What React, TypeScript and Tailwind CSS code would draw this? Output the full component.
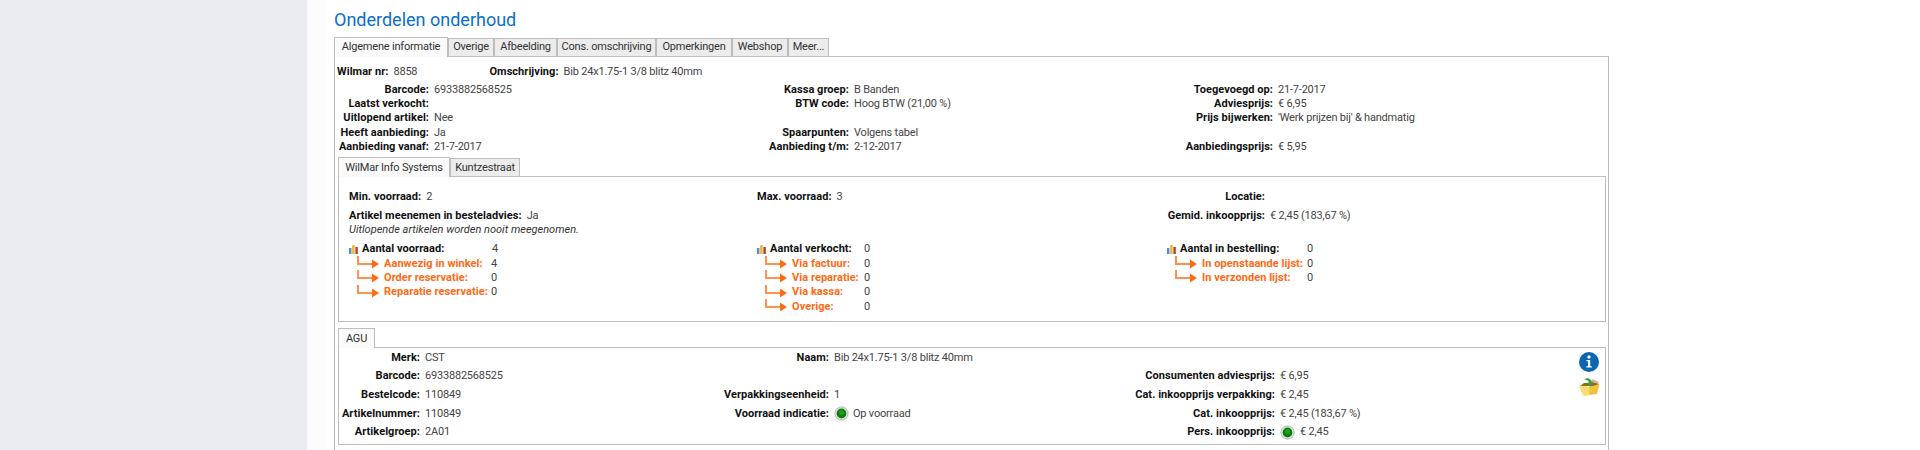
import type { ReactNode } from "react";

const font = { fontFamily: 'Roboto, "Open Sans", sans-serif' };

function BarIcon() {
  return (
    <svg width="9" height="9" viewBox="0 0 9 9" className="shrink-0">
      <rect x="0" y="3" width="2.4" height="6" fill="#4f8fc9" />
      <rect x="3.2" y="0" width="2.4" height="9" fill="#e5b53c" />
      <rect x="6.4" y="2" width="2.4" height="7" fill="#b5401c" />
    </svg>
  );
}

function ArrowIcon() {
  return (
    <svg width="22" height="16" viewBox="0 0 22 16" className="shrink-0">
      <path d="M1 0V8H16" fill="none" stroke="#ff9248" strokeWidth="2" />
      <path d="M15 3.5L22 8L15 12.5Z" fill="#ff6a13" />
    </svg>
  );
}

function Dot() {
  return (
    <svg width="15" height="15" viewBox="0 0 15 15" className="shrink-0">
      <circle cx="7.5" cy="7.5" r="7.2" fill="#c4c8c4" />
      <circle cx="7.5" cy="7.5" r="5.8" fill="#eef0ee" />
      <circle cx="7.5" cy="7.5" r="4.9" fill="#0c7f10" />
      <circle cx="7.5" cy="6.5" r="2.6" fill="#1c9e1e" />
    </svg>
  );
}

function InfoIcon() {
  return (
    <svg width="20" height="20" viewBox="0 0 20 20">
      <circle cx="10" cy="10" r="10" fill="#0b66b2" />
      <circle cx="10" cy="5" r="1.7" fill="#fff" />
      <path d="M7.5 8H11.2V14.3H12.8V15.6H7.3V14.3H9V9.3H7.5Z" fill="#fff" />
    </svg>
  );
}

function BasketIcon() {
  return (
    <svg width="21" height="19" viewBox="0 0 21 19">
      <path d="M13 2L20 5L18 9L11 7Z" fill="#e8a9a0" />
      <path d="M1 9L5 6H17L20 8L19 9Z" fill="#8d6a1c" />
      <path d="M0.5 8.5L10 10L20.5 7L18 17L5 18.5L2.5 15Z" fill="#f4c13d" />
      <path d="M0.5 8.5L10 10L10.5 18.5L5 18.5L2.5 15Z" fill="#fbdc73" />
      <path d="M5 2.5C8 0 12 1 12.5 5L15 4.5L11.5 10L7.5 6L10 5.5C9.5 3.5 7.5 2.5 5 2.5Z" fill="#3f9c3b" />
    </svg>
  );
}

function Label({ className = "", children }: { className?: string; children?: ReactNode }) {
  return <span className={`shrink-0 font-bold tracking-[0.05px] text-[#111] whitespace-nowrap ${className}`}>{children}</span>;
}

function Tab({ label, active, className = "" }: { label: string; active?: boolean; className?: string }) {
  return (
    <div
      className={
        active
          ? `h-[20px] border border-b-0 border-[#bdbdbd] bg-[#fafafa] flex items-center justify-center whitespace-nowrap text-[#333] -mb-px relative ${className}`
          : `h-[18px] border border-b-0 border-[#bdbdbd] bg-[#ececec] flex items-center justify-center whitespace-nowrap text-[#333] ${className}`
      }
    >
      {label}
    </div>
  );
}

function InfoRow({ a, av, b, bv, c, cv }: { a: string; av?: string; b?: string; bv?: string; c?: string; cv?: string }) {
  return (
    <div className="flex leading-[14.33px] h-[14.33px]">
      <div className="w-[425px] flex">
        <Label className="w-[94px] flex justify-end">{a}</Label>
        <span className="ml-[5px]">{av}</span>
      </div>
      <div className="w-[424px] flex">
        <Label className="w-[89px] flex justify-end">{b}</Label>
        <span className="ml-[5px]">{bv}</span>
      </div>
      <div className="flex">
        <Label className="w-[89px] flex justify-end">{c}</Label>
        <span className="ml-[5px]">{cv}</span>
      </div>
    </div>
  );
}

function Stat({ label, value, rows, valueCol, subCol }: {
  label: string;
  value: string;
  rows: [string, string][];
  valueCol: string;
  subCol: string;
}) {
  return (
    <div className="leading-[14.33px]">
      <div className="flex items-center h-[14.33px]">
        <BarIcon />
        <Label className={`ml-[4px] ${valueCol}`}>{label}</Label>
        <span>{value}</span>
      </div>
      {rows.map(([name, val]) => (
        <div key={name} className="flex items-center h-[14.33px]">
          <span className="ml-[8px] mr-[5px] flex"><ArrowIcon /></span>
          <span className={`shrink-0 font-bold tracking-[0.05px] text-[#ff6a13] whitespace-nowrap ${subCol}`}>{name}</span>
          <span>{val}</span>
        </div>
      ))}
    </div>
  );
}

function AguRow({ a, av, b, bv, c, cv }: { a: string; av: string; b?: string; bv?: ReactNode; c?: string; cv?: ReactNode }) {
  return (
    <div className="flex items-center h-[18.7px]">
      <div className="w-[413px] flex items-center">
        <Label className="w-[81px] flex justify-end">{a}</Label>
        <span className="ml-[5px]">{av}</span>
      </div>
      <div className="w-[446px] flex items-center">
        <Label className="w-[77px] flex justify-end">{b}</Label>
        <div className="ml-[5px] flex items-center gap-[4px]">{bv}</div>
      </div>
      <div className="flex items-center">
        <Label className="w-[77px] flex justify-end">{c}</Label>
        <div className="ml-[5px] flex items-center gap-[5px]">{cv}</div>
      </div>
    </div>
  );
}

export default function App() {
  return (
    <div className="h-[450px] w-[1920px] overflow-hidden flex bg-white text-[11px] tracking-[-0.2px] text-[#444]" style={font}>
      {/* Sidebar */}
      <div className="w-[307px] shrink-0 bg-[#e9ecf1]" />
      <div className="w-[18px] shrink-0 bg-[#fcfcfd]" />

      <main className="pl-[9px] w-[1284px] shrink-0">
        <h1 className="text-[18px] tracking-normal leading-[26px] pt-[7px] h-[36px] text-[#0b6fcb]">Onderdelen onderhoud</h1>

        {/* Tabs */}
        <div className="flex items-end h-[19.5px]">
          <Tab label="Algemene informatie" active className="w-[114px]" />
          <Tab label="Overige" className="w-[46px]" />
          <Tab label="Afbeelding" className="w-[63px]" />
          <Tab label="Cons. omschrijving" className="w-[99px]" />
          <Tab label="Opmerkingen" className="w-[76px]" />
          <Tab label="Webshop" className="w-[56px]" />
          <Tab label="Meer..." className="w-[41px]" />
        </div>

        <div className="border border-[#bdbdbd] h-[420px]">
          <div className="flex leading-[14.33px] mt-[8px] ml-[2px]">
            <Label>Wilmar nr:</Label>
            <span className="ml-[5px] w-[96px]">8858</span>
            <Label>Omschrijving:</Label>
            <span className="ml-[5px]">Bib 24x1.75-1 3/8 blitz 40mm</span>
          </div>

          <div className="mt-[4px]">
            <InfoRow a="Barcode:" av="6933882568525" b="Kassa groep:" bv="B Banden" c="Toegevoegd op:" cv="21-7-2017" />
            <InfoRow a="Laatst verkocht:" b="BTW code:" bv="Hoog BTW (21,00 %)" c="Adviesprijs:" cv="€ 6,95" />
            <InfoRow a="Uitlopend artikel:" av="Nee" c="Prijs bijwerken:" cv="'Werk prijzen bij' & handmatig" />
            <InfoRow a="Heeft aanbieding:" av="Ja" b="Spaarpunten:" bv="Volgens tabel" />
            <InfoRow a="Aanbieding vanaf:" av="21-7-2017" b="Aanbieding t/m:" bv="2-12-2017" c="Aanbiedingsprijs:" cv="€ 5,95" />
          </div>

          {/* Stock tabs */}
          <div className="flex items-end h-[19px] mt-[3px] ml-[3px]">
            <Tab label="WilMar Info Systems" active className="w-[112px]" />
            <Tab label="Kuntzestraat" className="w-[70px]" />
          </div>
          <div className="ml-[3px] mr-[2px] border border-[#bdbdbd] h-[146px] pl-[10px] pt-[13px]">
            <div className="flex leading-[14px]">
              <div className="w-[408px]">
                <Label>Min. voorraad:</Label>
                <span className="ml-[5px]">2</span>
              </div>
              <div className="w-[410px]">
                <Label>Max. voorraad:</Label>
                <span className="ml-[5px]">3</span>
              </div>
              <Label className="w-[98px] flex justify-end">Locatie:</Label>
            </div>
            <div className="flex leading-[14px] mt-[5px]">
              <div className="w-[818px]">
                <Label>Artikel meenemen in besteladvies:</Label>
                <span className="ml-[5px]">Ja</span>
              </div>
              <Label className="w-[98px] flex justify-end">Gemid. inkoopprijs:</Label>
              <span className="ml-[5px]">€ 2,45 (183,67 %)</span>
            </div>
            <div className="italic tracking-normal leading-[14px] text-[#333]">Uitlopende artikelen worden nooit meegenomen.</div>

            <div className="flex mt-[5px]">
              <div className="w-[408px]">
                <Stat
                  label="Aantal voorraad:"
                  value="4"
                  valueCol="w-[130px]"
                  subCol="w-[107px]"
                  rows={[["Aanwezig in winkel:", "4"], ["Order reservatie:", "0"], ["Reparatie reservatie:", "0"]]}
                />
              </div>
              <div className="w-[410px]">
                <Stat
                  label="Aantal verkocht:"
                  value="0"
                  valueCol="w-[94px]"
                  subCol="w-[72px]"
                  rows={[["Via factuur:", "0"], ["Via reparatie:", "0"], ["Via kassa:", "0"], ["Overige:", "0"]]}
                />
              </div>
              <Stat
                label="Aantal in bestelling:"
                value="0"
                valueCol="w-[127px]"
                subCol="w-[105px]"
                rows={[["In openstaande lijst:", "0"], ["In verzonden lijst:", "0"]]}
              />
            </div>
          </div>

          {/* Supplier tabs */}
          <div className="flex items-end h-[20px] mt-[5px] ml-[3px]">
            <Tab label="AGU" active className="w-[37px]" />
          </div>
          <div className="ml-[3px] mr-[2px] border border-[#bdbdbd] h-[98px] flex">
            <div className="flex-1">
              <AguRow a="Merk:" av="CST" b="Naam:" bv="Bib 24x1.75-1 3/8 blitz 40mm" />
              <AguRow a="Barcode:" av="6933882568525" c="Consumenten adviesprijs:" cv="€ 6,95" />
              <AguRow a="Bestelcode:" av="110849" b="Verpakkingseenheid:" bv="1" c="Cat. inkoopprijs verpakking:" cv="€ 2,45" />
              <AguRow a="Artikelnummer:" av="110849" b="Voorraad indicatie:" bv={<><Dot /><span>Op voorraad</span></>} c="Cat. inkoopprijs:" cv="€ 2,45 (183,67 %)" />
              <AguRow a="Artikelgroep:" av="2A01" c="Pers. inkoopprijs:" cv={<><Dot /><span>€ 2,45</span></>} />
            </div>
            <div className="w-[26px] pt-[4px] flex flex-col gap-[5px]">
              <InfoIcon />
              <BasketIcon />
            </div>
          </div>
        </div>
      </main>
    </div>
  );
}
